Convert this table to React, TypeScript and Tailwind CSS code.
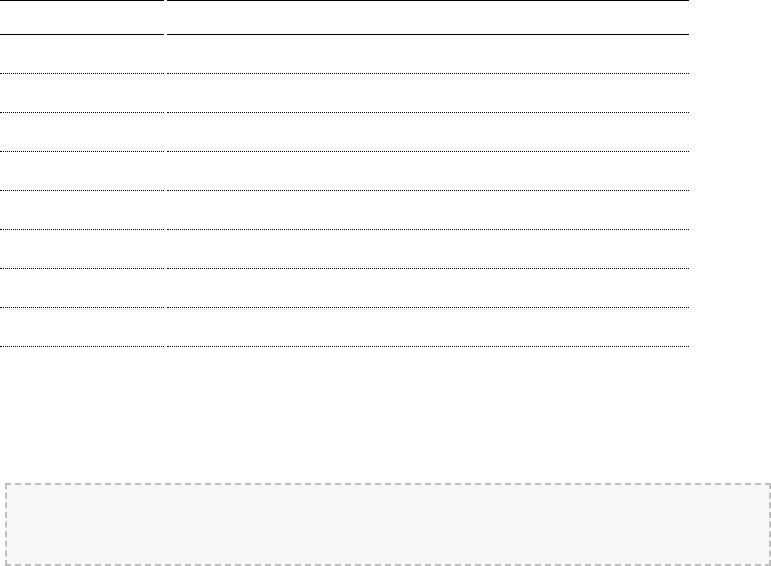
const rows = Array.from({ length: 8 }, (_, i) => i);

const App = () => {
  return (
    <div className="min-h-screen bg-white font-['Liberation_Sans',sans-serif]">
      <div className="grid w-[689px] grid-cols-[164px_522px] gap-x-[3px]">
        <div className="h-[35px] border-y border-black"></div>
        <div className="h-[35px] border-y border-black"></div>
        {rows.map((r) => (
          <div key={r} className="contents">
            <div className="h-[39px] border-b border-dotted border-black"></div>
            <div className="h-[39px] border-b border-dotted border-black"></div>
          </div>
        ))}
      </div>
      <div className="ml-[5px] mt-[136px] h-[83px] w-[766px] border-2 border-dashed border-[#c0c0c0] bg-[#f7f7f7]"></div>
    </div>
  );
};

export default App;
